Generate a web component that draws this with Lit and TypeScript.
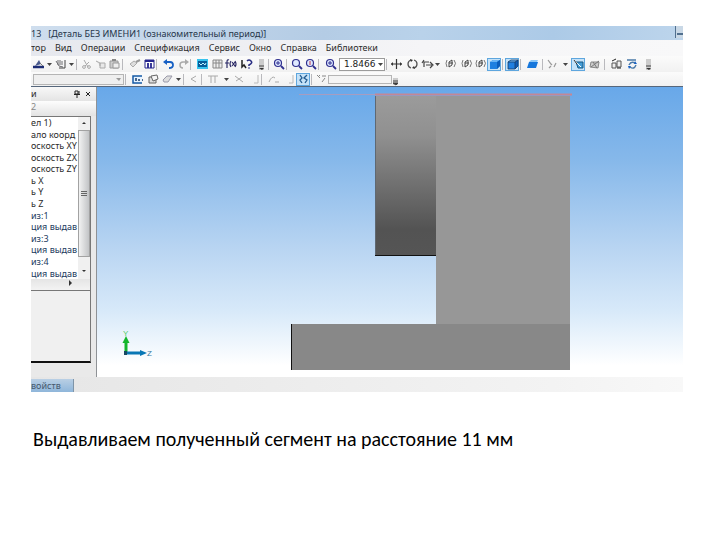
import { LitElement, html, css, svg, nothing } from "lit";
import { customElement } from "lit/decorators.js";

const lens = svg`<circle cx="6" cy="5" r="3.5" fill="#dfe9ff" stroke="#30308f" stroke-width="1.2"/><path d="M9 8l3 3" stroke="#30308f" stroke-width="1.8"/>`;
const cube = svg`<path d="M2 4l3-2h7v6l-3 3H2z" fill="#1f7fe0"/><path d="M2 4l3-2h7l-3 2z" fill="#69b4f5"/><path d="M9 4l3-2v6l-3 3z" fill="#0b5cba"/>`;

const icons: Record<string, unknown> = {
  shape: svg`<path d="M3 8l4-6 2 4z" fill="#4a5a8c"/><path d="M1 9h11" stroke="#1c2c74" stroke-width="2.5"/><path d="M8 5l3 3" stroke="#777"/>`,
  hand: svg`<path d="M2 3l3 5 4 1M4 2v5M6 2v5M8 3v4" stroke="#6c6c70" fill="none"/><path d="M11 2v8H5" stroke="#444" fill="none"/>`,
  cut: svg`<path d="M4 2l4 7M9 4L5 8" stroke="#aaa" fill="none"/><circle cx="4" cy="9" r="1.4" fill="none" stroke="#aaa"/><circle cx="9" cy="9" r="1.4" fill="none" stroke="#aaa"/>`,
  copy: svg`<path d="M2 3l4 2v3M6 5h5v5H6z" fill="#e8e8e8" stroke="#aaa"/>`,
  paste: svg`<path d="M2 3h8v7H2z" fill="#ccc" stroke="#999"/><path d="M5 5h6v5H5z" fill="#eee" stroke="#999"/><path d="M4 2h4" stroke="#888" stroke-width="2"/>`,
  brush: svg`<path d="M2 6l4-3 3 2-4 4z" fill="#ddd" stroke="#aaa"/><path d="M8 4l4-2" stroke="#999" stroke-width="2"/>`,
  table: svg`<path d="M2 2h9v8H2z" fill="#fff" stroke="#26268f"/><path d="M2 3h9M5 5v5M8 5v5" stroke="#26268f" stroke-width="1.8"/>`,
  undo: svg`<path d="M3 4h5q3 0 3 3t-4 3" fill="none" stroke="#1760c4" stroke-width="1.8"/><path d="M1 4l4-3v6z" fill="#1760c4"/>`,
  redo: svg`<path d="M10 4H6Q3 4 3 7t3 3" fill="none" stroke="#aaa" stroke-width="1.5"/><path d="M12 4L8 1v6z" fill="#aaa"/>`,
  screen: svg`<path d="M1 1h11v10H1z" fill="#38c3ee"/><path d="M2 3h9v6H2z" fill="#075c98"/><path d="M3 5l2 2 2-2 2 2 1-2" stroke="#bff2ff" fill="none"/>`,
  grid: svg`<path d="M2 2h9v8H2zM2 5h9M5 2v8M8 2v8" fill="#eee" stroke="#888"/>`,
  fx: svg`<path d="M5 2Q3 1 3 4v6M1 5h4M7 3q-2 3 0 6M11 3q2 3 0 6M8 4l3 4M11 4L8 8" fill="none" stroke="#2b2a66" stroke-width="1.2"/>`,
  help: svg`<path d="M2 2v7l2-2 2 3" fill="none" stroke="#222" stroke-width="1.5"/><path d="M7 3q2-2 4 0t-2 4v1" fill="none" stroke="#2a2e83" stroke-width="1.6"/><path d="M8 10h2" stroke="#2a2e83"/>`,
  grip: svg`<path d="M4 1h5v11H4z" fill="#ccc"/><path d="M4 8h5" stroke="#444"/><path d="M4 10h5l-2 2z" fill="#333"/>`,
  zoomin: svg`${lens}<path d="M4 5h4M6 3v4" stroke="#30308f"/>`,
  zoom: lens,
  zoomfit: svg`${lens}<path d="M6 3v4" stroke="#c03a4a"/>`,
  move: svg`<path d="M1 6h11M6.500 1v10" stroke="#333" stroke-width="1.2"/><path d="M1 6l2-2v4zM12 6l-2-2v4z" fill="#333"/>`,
  rotate: svg`<path d="M5 2Q2 3 2 6t3 4M8 10q3-1 3-4T8 2" fill="none" stroke="#555" stroke-width="1.3"/><path d="M4 1l3 1-2 2zM9 11l-3-1 2-2z" fill="#333"/>`,
  pan: svg`<path d="M3 9V4h5M3 2L1 5M5 7h6M9 4l3 3-3 3" fill="none" stroke="#444" stroke-width="1.2"/>`,
  wire: svg`<path d="M3 2Q1 5 3 9M10 2q3 3 0 7" fill="none" stroke="#777"/><path d="M5 9V4l3-2v5zM5 5h4" fill="none" stroke="#444"/>`,
  cube,
  cubeEdge: svg`${cube}<path d="M2 4l3-2h7v6l-3 3H2zM2 4h7v7M9 4l3-2" fill="none" stroke="#1a3c66" stroke-width=".8"/>`,
  slab: svg`<path d="M1 10l2-6h9l-2 6z" fill="#1677dc"/><path d="M3 4l2-2h7l-1 2z" fill="#8ac6f7"/>`,
  axis: svg`<path d="M2 2l3 4 1 1M3 10l2-2M8 9l2-4" fill="none" stroke="#999" stroke-width="1.2"/>`,
  sketch: svg`<path d="M4 4h7v6H6z" fill="#459dd6" stroke="#135784"/><path d="M2 2l7 7" stroke="#fff"/><path d="M2 2l3 4" stroke="#333"/>`,
  bars: svg`<path d="M2 9l1-5h8l-1 6z" fill="#ccc" stroke="#888"/><path d="M3 9l8-6M5 4l4 6" stroke="#777"/>`,
  boxes: svg`<path d="M2 5h4v5H2zM7 3h4v6H7z" fill="#eee" stroke="#555"/><path d="M2 3l4-2M7 10h4" stroke="#222"/>`,
  refresh: svg`<path d="M1 2h9M3 7q2-4 6-2M10 7q-2 5-6 2" fill="none" stroke="#4b7aa8" stroke-width="1.4"/><path d="M9 3l2 3H8zM3 11L2 8h3z" fill="#1760c4"/>`,
  layer: svg`<path d="M11 3H2v7h9" fill="#e5f2ff" stroke="#155aa5" stroke-width="1.5"/><path d="M5 5v3M7 7h2M11 7h1" stroke="#123a6a" stroke-width="1.5"/>`,
  sheet: svg`<path d="M2 4h7v6H2z" fill="#ddd" stroke="#666"/><path d="M4 3l6-1 1 4-5 2z" fill="#f5f5f5" stroke="#666"/>`,
  eraser: svg`<path d="M2 7l4-4h5L7 9H3z" fill="#ddd" stroke="#9a9aaa"/>`,
  back: svg`<path d="M9 3L4 6l5 3" fill="none" stroke="#aaa"/>`,
  tee: svg`<path d="M1 3h10M4 3v7M8 3v7" fill="none" stroke="#aaa"/>`,
  slash: svg`<path d="M2 3l8 6M3 8l6-4" fill="none" stroke="#aaa"/>`,
  arc: svg`<path d="M2 9q3-7 6-4M8 9h4" fill="none" stroke="#aaa"/>`,
  corner: svg`<path d="M10 2v8H6" fill="none" stroke="#bbb"/>`,
  snap: svg`<path d="M3 2l2 3-2 2 2 3M10 2L7 5l3 2-2 3" fill="none" stroke="#235c91" stroke-width="1.3"/>`,
  diag: svg`<path d="M2 2l3 3M5 2L3 4M7 3h4M7 9l3-4" fill="none" stroke="#888"/>`,
};

type Item = [kind: string, size: "s" | "m" | "l", label: string, on?: boolean];

const viewBar: Item[] = [
  ["shape", "m", "Геометрия"], ["more", "s", "Ещё"], ["hand", "m", "Правка"], ["more", "s", "Ещё"], ["|", "s", ""],
  ["cut", "m", "Вырезать"], ["copy", "m", "Копировать"], ["paste", "m", "Вставить"], ["|", "s", ""],
  ["brush", "l", "Формат"], ["table", "s", "Свойства"], ["|", "s", ""],
  ["undo", "l", "Отменить"], ["redo", "s", "Повторить"], ["|", "s", ""],
  ["screen", "l", "Менеджер"], ["grid", "s", "Таблица"], ["fx", "m", "Переменные"], ["help", "l", "Справка"], ["grip", "s", "Параметры"], ["|", "s", ""],
  ["zoomin", "m", "Увеличить"], ["|", "s", ""], ["zoom", "m", "Рамка"], ["zoomfit", "m", "Масштаб"], ["|", "s", ""],
  ["zoomin", "l", "Показать всё"], ["scale", "l", "Масштаб"], ["|", "s", ""],
  ["move", "m", "Сдвинуть"], ["rotate", "l", "Повернуть"], ["pan", "s", "Ориентация"], ["more", "s", "Ещё"],
  ["wire", "l", "Каркас"], ["wire", "m", "Без линий"], ["wire", "m", "Тонкие линии"],
  ["cube", "m", "Полутоновое", true], ["|", "s", ""], ["cubeEdge", "m", "С каркасом", true], ["|", "s", ""], ["slab", "l", "Перспектива"], ["|", "s", ""],
  ["axis", "m", "Сечение"], ["more", "m", "Ещё"], ["sketch", "m", "Эскиз", true], ["bars", "l", "Упрощение"], ["|", "s", ""],
  ["boxes", "l", "Перестроить"], ["refresh", "m", "Обновить"], ["grip", "l", "Параметры"],
];

const stateBar: Item[] = [
  ["|", "s", ""], ["layer", "l", "Слой"], ["sheet", "m", "Лист"], ["eraser", "m", "Стереть"], ["more", "s", "Ещё"], ["|", "s", ""],
  ["back", "m", "Назад"], ["|", "s", ""], ["tee", "l", "Размер"], ["more", "s", "Ещё"], ["slash", "l", "Отрезок"], ["corner", "s", "Угол"], ["|", "s", ""],
  ["arc", "l", "Дуга"], ["corner", "m", "Фаска"], ["snap", "m", "Привязки", true], ["|", "s", ""], ["diag", "m", "Стиль"],
];

const tree = ["ел 1)", "ало коорд", "оскость XY", "оскость ZX", "оскость ZY", "ь X", "ь Y", "ь Z",
  "из:1", "ция выдав", "из:3", "ция выдав", "из:4", "ция выдав"];

@customElement("tool-items")
class ToolItems extends LitElement {
  static properties = { items: { attribute: false } };
  declare items: Item[];

  static styles = css`
    :host { display: flex; align-items: center; flex: none; }
    button { display: flex; align-items: center; justify-content: center; flex: none; box-sizing: border-box; height: 13px; padding: 0; border: 0; background: none; }
    svg { display: block; width: 13px; height: 12px; flex: none; }
    .s { width: 12px; }
    .m { width: 14px; }
    .l { width: 18px; }
    .more { width: 8px; }
    .more.m { width: 12px; }
    .more svg { width: 5px; height: 3px; }
    .on { border: 1px solid #5ea6de; background: #c5e2f8; }
    .sep { flex: none; width: 1px; height: 11px; margin: 0 2px 0 1px; background: #b9b9bd; }
    .scale { display: flex; align-items: center; flex: none; box-sizing: border-box; width: 46px; height: 13px; border: 1px solid #9b9b9b; background: #fff; }
    input { box-sizing: border-box; width: 36px; height: 11px; padding: 0 0 0 4px; border: 0; background: none; font: 9px/11px "DejaVu Sans", sans-serif; color: #222; outline: none; }
    .scale button { width: 8px; height: 11px; }
    .scale svg { width: 5px; height: 3px; }
  `;

  render() {
    const arrow = html`<svg viewBox="0 0 5 3"><path d="M0 0h5l-2.500 3z" fill="#444"/></svg>`;
    return this.items.map(([kind, size, label, on]) => {
      if (kind === "|") return html`<span class="sep"></span>`;
      if (kind === "scale") return html`<span class="scale"><input aria-label=${label} value="1.8466"><button aria-label="Список масштабов">${arrow}</button></span>`;
      if (kind === "more") return html`<button class="more ${size}" aria-label=${label}>${arrow}</button>`;
      return html`<button class="${size} ${on ? "on" : ""}" aria-label=${label}><svg viewBox="0 0 13 12">${icons[kind] ?? nothing}</svg></button>`;
    });
  }
}

@customElement("app-root")
class AppRoot extends LitElement {
  static styles = css`
    :host { display: block; padding: 26px 37px 0 31px; background: #fff; font: 9px/12px "Noto Sans", "Open Sans", sans-serif; color: #2b2b2b; }
    * { box-sizing: border-box; }
    button { padding: 0; border: 0; background: none; font: inherit; color: inherit; }
    .window { overflow: hidden; background: #f1f1f1; }
    .title { display: flex; justify-content: space-between; height: 14px; white-space: pre; background: linear-gradient(100deg, #cfdeee, #b4cce5 45%, #b9d2ea 60%, #accae7 80%, #bdd5ec); color: #26364a; }
    .title span { line-height: 16px; }
    .title button { width: 8px; height: 12px; border-left: 1px solid #51708f; background: #c9d8e6; }
    .title svg { display: block; width: 7px; height: 10px; }
    nav { display: flex; gap: 9px; height: 16px; align-items: center; background: linear-gradient(90deg, #e6e8ee, #f5f5f7 60%, #f8f8f9); }
    .bar { display: flex; align-items: center; height: 16px; background: linear-gradient(#fbfbfb, #f1f1f1); }
    .bar.low { height: 14px; padding-left: 2px; }
    select { appearance: none; width: 91px; height: 11px; border: 1px solid #b5b5b5; background: #efefef; }
    .pick { position: relative; display: flex; }
    .pick svg { position: absolute; right: 3px; top: 4px; width: 5px; height: 3px; }
    .line { width: 64px; height: 9px; padding: 0; border: 1px solid #b5b5b5; background: #f4f4f4; }
    .grip { display: flex; width: 10px; height: 13px; }
    .body { display: flex; border-top: 1px solid #56677c; }
    .side { display: flex; flex-direction: column; width: 66px; flex: none; border-right: 1px solid #8f9296; background: #e9e9e9; }
    .head { display: flex; align-items: center; height: 14px; padding-right: 3px; background: linear-gradient(#f8f8f8, #e4e4e4); }
    .head span { flex: 1; }
    .head button { width: 11px; height: 12px; }
    .head svg { display: block; margin: 2px; width: 8px; height: 8px; }
    .sub { height: 15px; background: linear-gradient(#fdfdfd, #e3e3e3); color: #888; }
    .panel { width: 60px; border-top: 1px solid #777; border-right: 1px solid #777; }
    .list { display: flex; height: 162px; background: #fff; }
    ul { display: flex; flex-direction: column; flex: 1; min-width: 0; margin: 0; padding: 0; list-style: none; overflow: hidden; white-space: nowrap; }
    li { flex: 1; min-height: 0; line-height: 12px; }
    .solid { color: #20395c; }
    .scroll { display: flex; flex-direction: column; width: 12px; flex: none; background: #f0f0f0; }
    .scroll svg { display: block; width: 12px; height: 13px; flex: none; }
    .thumb { display: flex; align-items: center; justify-content: center; flex: 1; margin-bottom: 9px; border: 1px solid #a2a2a2; background: linear-gradient(90deg, #f2f2f2, #c2c4c6); }
    .hscroll { display: flex; justify-content: flex-end; height: 11px; padding-right: 14px; background: linear-gradient(#e5e5e5, #f3f3f3); }
    .hscroll svg { width: 12px; height: 9px; }
    .empty { width: 60px; height: 73px; border: 1px solid #777; border-left: 0; border-bottom: 2px solid #111; background: #f0f0f0; }
    .scene { flex: 1; min-width: 0; height: 290px; background: linear-gradient(#68a8e9, #86b8ea 25%, #b9d5f2 56%, #d7e9f9 77%, #fff 96%); }
    .scene svg { display: block; width: 100%; height: 290px; }
    .axes { font: 8px "Liberation Sans", sans-serif; }
    .status { display: flex; align-items: flex-end; height: 15px; background: linear-gradient(90deg, #e6e6e6, #f3f3f3 80%, #f8f8f8); }
    .status button { width: 43px; height: 13px; border-right: 1px solid #7f95a8; background: linear-gradient(#b9cfe4, #8fb6da); text-align: left; line-height: 12px; color: #46586c; }
    .caption { margin: 0; padding: 33px 0 0 2px; font: 20px/28px Carlito, Calibri, "Noto Sans", sans-serif; font-size-adjust: none; color: #000; white-space: nowrap; }
  `;

  render() {
    return html`
      <main>
        <section class="window">
          <header class="title"><span>13   [Деталь БЕЗ ИМЕНИ1 (ознакомительный период)]</span><button aria-label="Свернуть"><svg viewBox="0 0 7 10"><path d="M1 7h6" stroke="#51708f" stroke-width="2"/></svg></button></header>
          <nav>${["тор", "Вид", "Операции", "Спецификация", "Сервис", "Окно", "Справка", "Библиотеки"].map((m) => html`<button>${m}</button>`)}</nav>
          <div class="bar"><tool-items .items=${viewBar}></tool-items></div>
          <div class="bar low">
            <span class="pick"><select aria-label="Состояние"></select><svg viewBox="0 0 5 3"><path d="M0 0h5l-2 3z" fill="#999"/></svg></span>
            <tool-items .items=${stateBar}></tool-items>
            <input class="line" aria-label="Стиль линии">
            <svg class="grip" viewBox="0 0 10 13"><path d="M1 5h5v7H1z" fill="#ccc"/><path d="M1 8h5M1 10h5l-2 2z" stroke="#444" fill="#333"/></svg>
          </div>
          <div class="body">
            <aside class="side">
              <div class="head"><span>и</span>
                <button aria-label="Закрепить"><svg viewBox="0 0 8 8"><path d="M2 1h3v3H2zM1 4.500h6M4 4v4M6 1v3" stroke="#222" fill="none"/></svg></button>
                <button aria-label="Закрыть"><svg viewBox="0 0 8 8"><path d="M2 2l4 4M6 2L2 6" stroke="#222"/></svg></button>
              </div>
              <div class="sub">2</div>
              <div class="panel">
                <div class="list">
                  <ul>${tree.map((t, i) => html`<li class=${i > 7 ? "solid" : ""}>${t}</li>`)}</ul>
                  <div class="scroll">
                    <svg viewBox="0 0 12 13"><path d="M4 7l2-2 2 2z" fill="#333"/></svg>
                    <div class="thumb"><svg viewBox="0 0 12 13"><path d="M3 4.500h6M3 6.500h6M3 8.500h6" stroke="#666"/></svg></div>
                    <svg viewBox="0 0 12 13"><path d="M4 4l2 2 2-2z" fill="#333"/></svg>
                  </div>
                </div>
                <div class="hscroll"><svg viewBox="0 0 12 9"><path d="M5 1l3 3-3 3z" fill="#333"/></svg></div>
              </div>
              <div class="empty"></div>
            </aside>
            <div class="scene">
              <svg viewBox="0 0 586 290" preserveAspectRatio="xMinYMin meet" role="img" aria-label="Деталь, вид сбоку">
                <defs><linearGradient id="boss" x1="0" y1="0" x2="0" y2="1"><stop offset="0" stop-color="#9b9b9b"/><stop offset=".25" stop-color="#909090"/><stop offset=".84" stop-color="#535353"/><stop offset="1" stop-color="#555"/></linearGradient></defs>
                <path d="M202 7.500H475" stroke="#a79cc0" stroke-width="1"/>
                <path d="M278 7.500H475" stroke="#c48795" stroke-width="2"/>
                <path d="M339 9h134v229H339z" fill="#979797"/>
                <path d="M278 9h61v159h-61z" fill="url(#boss)"/>
                <path d="M278 168.500h61" fill="none" stroke="#111"/>
                <path d="M278.500 9v159" stroke="#5f6872"/>
                <path d="M194 237h279v46H194z" fill="#888"/>
                <path d="M194.500 237v46" stroke="#111"/>
                <path d="M29 266V254" stroke="#12b52b" stroke-width="3"/><path d="M25.500 256L29 249l3.500 7z" fill="#12b52b"/>
                <path d="M30 266h14" stroke="#0877b5" stroke-width="3"/><path d="M43 263l7 3-7 3z" fill="#0877b5"/>
                <path d="M27 264h3v4h-3z" fill="#184a62"/>
                <g class="axes"><text x="26" y="249" fill="#50cd67">Y</text><text x="50" y="269" fill="#33799e">Z</text></g>
              </svg>
            </div>
          </div>
          <footer class="status"><button>войств</button></footer>
        </section>
        <p class="caption">Выдавливаем полученный сегмент на расстояние 11 мм</p>
      </main>`;
  }
}
